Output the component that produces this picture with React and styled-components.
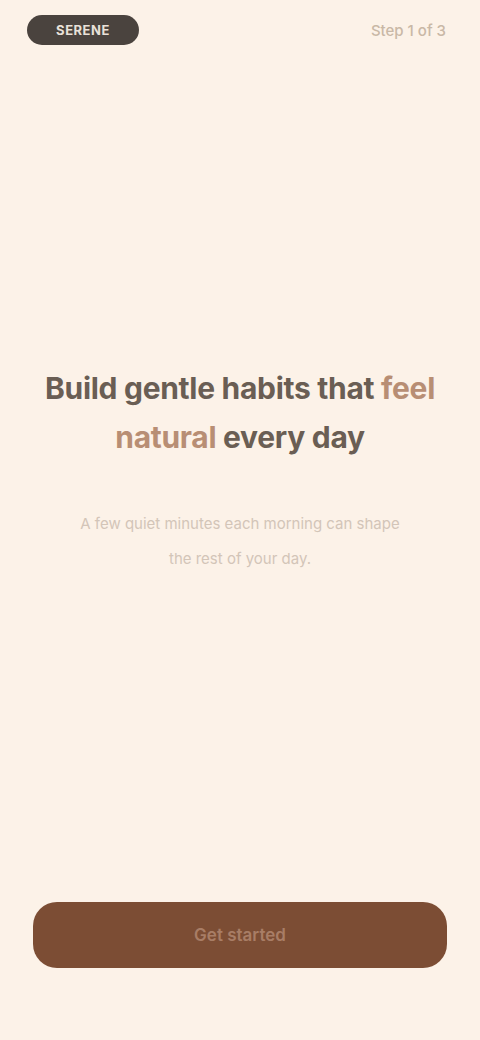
import styled, { createGlobalStyle } from 'styled-components';

const GlobalStyle = createGlobalStyle`
    html, body {
        margin: 0;
        padding: 0;
        background: #fcf2e8;
    }
    * {
        box-sizing: border-box;
    }
`

const Screen = styled.main`
    min-height: 1040px;
    display: flex;
    flex-direction: column;
    background: #fcf2e8;
    font-family: Inter, "Noto Sans", sans-serif;
`

const TopBar = styled.header`
    display: flex;
    align-items: center;
    justify-content: space-between;
    padding: 15px 34px 0 27px;
`

const Logo = styled.div`
    width: 112px;
    height: 30px;
    border-radius: 15px;
    background: #4a433e;
    color: #e9e1d9;
    font-size: 13px;
    font-weight: 700;
    letter-spacing: 0.04em;
    display: flex;
    align-items: center;
    justify-content: center;
`

const Skip = styled.button`
    border: 0;
    background: none;
    padding: 0;
    font-family: inherit;
    font-size: 15px;
    font-weight: 500;
    color: #c9b8a6;
`

const Hero = styled.section`
    flex: 1;
    display: flex;
    flex-direction: column;
    align-items: center;
    text-align: center;
    padding: 319px 36px 0;
`

const Title = styled.h1`
    margin: 0;
    font-size: 30px;
    line-height: 49px;
    font-weight: 700;
    letter-spacing: -0.01em;
    color: #6a5e54;
    max-width: 408px;
`

const Accent = styled.span`
    color: #b88e74;
`

const Subtitle = styled.p`
    margin: 44px 0 0;
    max-width: 340px;
    font-size: 15px;
    line-height: 35px;
    color: #d3c5b8;
`

const Footer = styled.footer`
    padding: 0 33px 72px;
`

const PrimaryButton = styled.button`
    width: 100%;
    height: 66px;
    border: 0;
    border-radius: 24px;
    background: #7c4d34;
    color: #a87d66;
    font-family: inherit;
    font-size: 17px;
    font-weight: 600;
`

export default function App() {
    return (
        <>
            <GlobalStyle />
            <Screen>
                <TopBar>
                    <Logo>SERENE</Logo>
                    <Skip>Step 1 of 3</Skip>
                </TopBar>

                <Hero>
                    <Title>
                        Build gentle habits that <Accent>feel</Accent> <Accent>natural</Accent> every day
                    </Title>
                    <Subtitle>
                        A few quiet minutes each morning can shape the rest of your day.
                    </Subtitle>
                </Hero>

                <Footer>
                    <PrimaryButton>Get started</PrimaryButton>
                </Footer>
            </Screen>
        </>
    )
}
